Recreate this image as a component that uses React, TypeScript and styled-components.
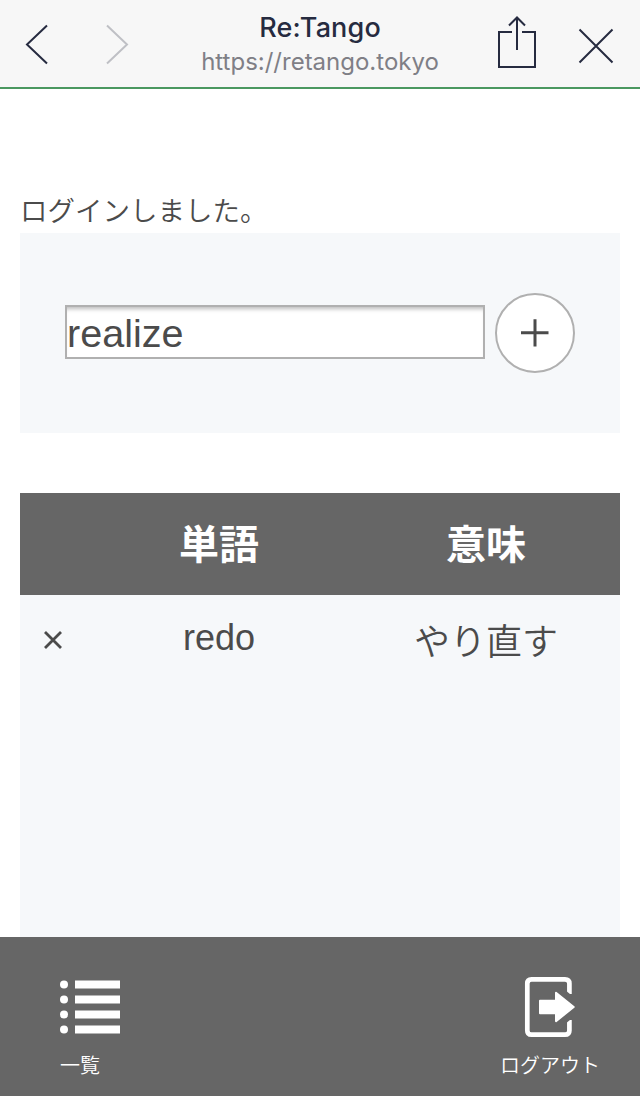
import React from "react";
import styled, { createGlobalStyle } from "styled-components";

const GlobalStyle = createGlobalStyle`
  * { box-sizing: border-box; }
  body {
    margin: 0;
    background: #fff;
    color: #4b4b4b;
    font-family: "Liberation Sans", "Noto Sans CJK JP", sans-serif;
  }
`;

const Screen = styled.div`
  display: flex;
  flex-direction: column;
  width: 640px;
  height: 1096px;
  overflow: hidden;
`;

const BrowserBar = styled.header`
  display: flex;
  flex: none;
  justify-content: space-between;
  height: 89px;
  background: #f7f7f7;
  border-bottom: 2px solid #4b9860;
`;

const BarActions = styled.nav`
  display: flex;
  width: 160px;
`;

const BarButton = styled.button<{ $width: number }>`
  width: ${(p) => p.$width}px;
  height: 87px;
  padding: 0;
  border: 0;
  background: none;
  svg { display: block; }
`;

const PageInfo = styled.div`
  display: flex;
  flex-direction: column;
  align-items: center;
  padding-top: 11px;
  font-family: Inter, sans-serif;
  white-space: nowrap;
`;

const PageTitle = styled.div`
  font-size: 27px;
  line-height: 34px;
  font-weight: 500;
  letter-spacing: 0.15px;
  color: #262b40;
`;

const PageUrl = styled.div`
  font-size: 24px;
  line-height: 34px;
  letter-spacing: 0;
  color: #7f7f86;
`;

const Content = styled.main`
  display: flex;
  flex: 1;
  flex-direction: column;
  min-height: 0;
  padding: 100px 20px 0;
`;

const Notice = styled.p`
  margin: 0;
  height: 44px;
  font-family: "Noto Sans CJK JP", sans-serif;
  font-size: 27.5px;
  font-weight: 350;
  line-height: 41px;
`;

const AddForm = styled.form`
  display: flex;
  flex: none;
  align-items: center;
  gap: 10px;
  height: 200px;
  margin-bottom: 60px;
  padding: 0 45px;
  background: #f6f8fa;
`;

const WordInput = styled.input`
  width: 420px;
  height: 54px;
  margin: 0 0 2px;
  padding: 2px 0 0;
  border: 2px solid #b0b0b0;
  border-radius: 0;
  outline: 0;
  background: #fff;
  box-shadow: inset 0 5px 4px -3px #bbb;
  color: #4b4b4b;
  font: 39.6px "Liberation Sans", sans-serif;
`;

const AddButton = styled.button`
  width: 80px;
  height: 80px;
  padding: 0;
  border: 2px solid #b0b0b0;
  border-radius: 50%;
  background: #fff;
  svg { display: block; }
`;

const WordTable = styled.section`
  flex: 1;
  background: #f6f8fa;
`;

const TableRow = styled.div`
  display: grid;
  grid-template-columns: 66px 266px 268px;
  text-align: center;
`;

const HeadRow = styled(TableRow)`
  height: 102px;
  background: #666;
  color: #fff;
  font: 700 40px/99px "Noto Sans CJK JP", sans-serif;
`;

const WordRow = styled(TableRow)`
  height: 90px;
`;

const Word = styled.span`
  font-size: 36px;
  line-height: 85px;
`;

const Meaning = styled.span`
  font: 350 36px/88px "Noto Sans CJK JP", sans-serif;
`;

const DeleteButton = styled.button`
  display: flex;
  align-items: center;
  justify-content: center;
  padding: 0;
  border: 0;
  background: none;
`;

const TabBar = styled.footer`
  display: flex;
  flex: none;
  justify-content: space-between;
  height: 159px;
  padding: 40px 40px 0 30px;
  background: #666;
`;

const Tab = styled.a<{ $align?: string }>`
  display: flex;
  flex-direction: column;
  align-items: center;
  width: 100px;
  color: #fff;
  font: 350 20px/30px "Noto Sans CJK JP", sans-serif;
  white-space: nowrap;
  svg {
    align-self: ${(p) => p.$align ?? "center"};
    margin-bottom: 13px;
  }
`;

export default function App() {
  return (
    <Screen>
      <GlobalStyle />
      <BrowserBar>
        <BarActions>
          <BarButton $width={80} aria-label="Back">
            <svg width="80" height="87" fill="none" stroke="#262b40" strokeWidth="2">
              <path d="M47 25.5 27 44.5 47 63.5" />
            </svg>
          </BarButton>
          <BarButton $width={80} aria-label="Forward">
            <svg width="80" height="87" fill="none" stroke="#bfc0c5" strokeWidth="2">
              <path d="M27 25.5 47 44.5 27 63.5" />
            </svg>
          </BarButton>
        </BarActions>
        <PageInfo>
          <PageTitle>Re:Tango</PageTitle>
          <PageUrl>https://retango.tokyo</PageUrl>
        </PageInfo>
        <BarActions>
          <BarButton $width={80} aria-label="Share">
            <svg width="80" height="87" fill="none" stroke="#262b40" strokeWidth="2">
              <path d="M32 32H19V67H55V32H42M37 50V17.5M29 25.5 37 17.5 45 25.5" />
            </svg>
          </BarButton>
          <BarButton $width={80} aria-label="Close">
            <svg width="80" height="87" fill="none" stroke="#262b40" strokeWidth="2">
              <path d="M19.5 29.5 52.5 62.5M52.5 29.5 19.5 62.5" />
            </svg>
          </BarButton>
        </BarActions>
      </BrowserBar>
      <Content>
        <Notice>ログインしました。</Notice>
        <AddForm>
          <WordInput type="text" defaultValue="realize" />
          <AddButton type="button" aria-label="Add">
            <svg width="76" height="76" stroke="#4b4b4b" strokeWidth="3">
              <path d="M24 37.7H51.5M38 24.3V51.5" />
            </svg>
          </AddButton>
        </AddForm>
        <WordTable>
          <HeadRow>
            <span />
            <span>単語</span>
            <span>意味</span>
          </HeadRow>
          <WordRow>
            <DeleteButton aria-label="Delete">
              <svg width="18" height="18" stroke="#4b4b4b" strokeWidth="2.8">
                <path d="M1 1 17 17M17 1 1 17" />
              </svg>
            </DeleteButton>
            <Word>redo</Word>
            <Meaning>やり直す</Meaning>
          </WordRow>
        </WordTable>
      </Content>
      <TabBar>
        <Tab $align="flex-end">
          <svg width="70" height="60" fill="#fff">
            {[7.5, 22.5, 37.5, 52.5].map((y) => (
              <g key={y}>
                <circle cx="4" cy={y} r="4" />
                <rect x="15" y={y - 4} width="45" height="8" />
              </g>
            ))}
          </svg>
          一覧
        </Tab>
        <Tab>
          <svg width="60" height="60" overflow="visible">
            <path
              d="M49.4 17V6.5Q49.4 2.3 45 2.3H11.5Q7.3 2.3 7.3 6.5V53.5Q7.3 57.7 11.5 57.7H45Q49.4 57.7 49.4 53.5V43"
              fill="none"
              stroke="#fff"
              strokeWidth="4.7"
            />
            <path d="M46.9 14.5 51.8 18.5V21H46.9ZM46.9 45.5 51.8 41.5V39H46.9Z" fill="#666" />
            <path
              d="M20 23.8H36V15.8L53.7 30 36 44.2V36.2H20Z"
              fill="#fff"
              stroke="#fff"
              strokeWidth="2"
              strokeLinejoin="round"
            />
          </svg>
          ログアウト
        </Tab>
      </TabBar>
    </Screen>
  );
}
